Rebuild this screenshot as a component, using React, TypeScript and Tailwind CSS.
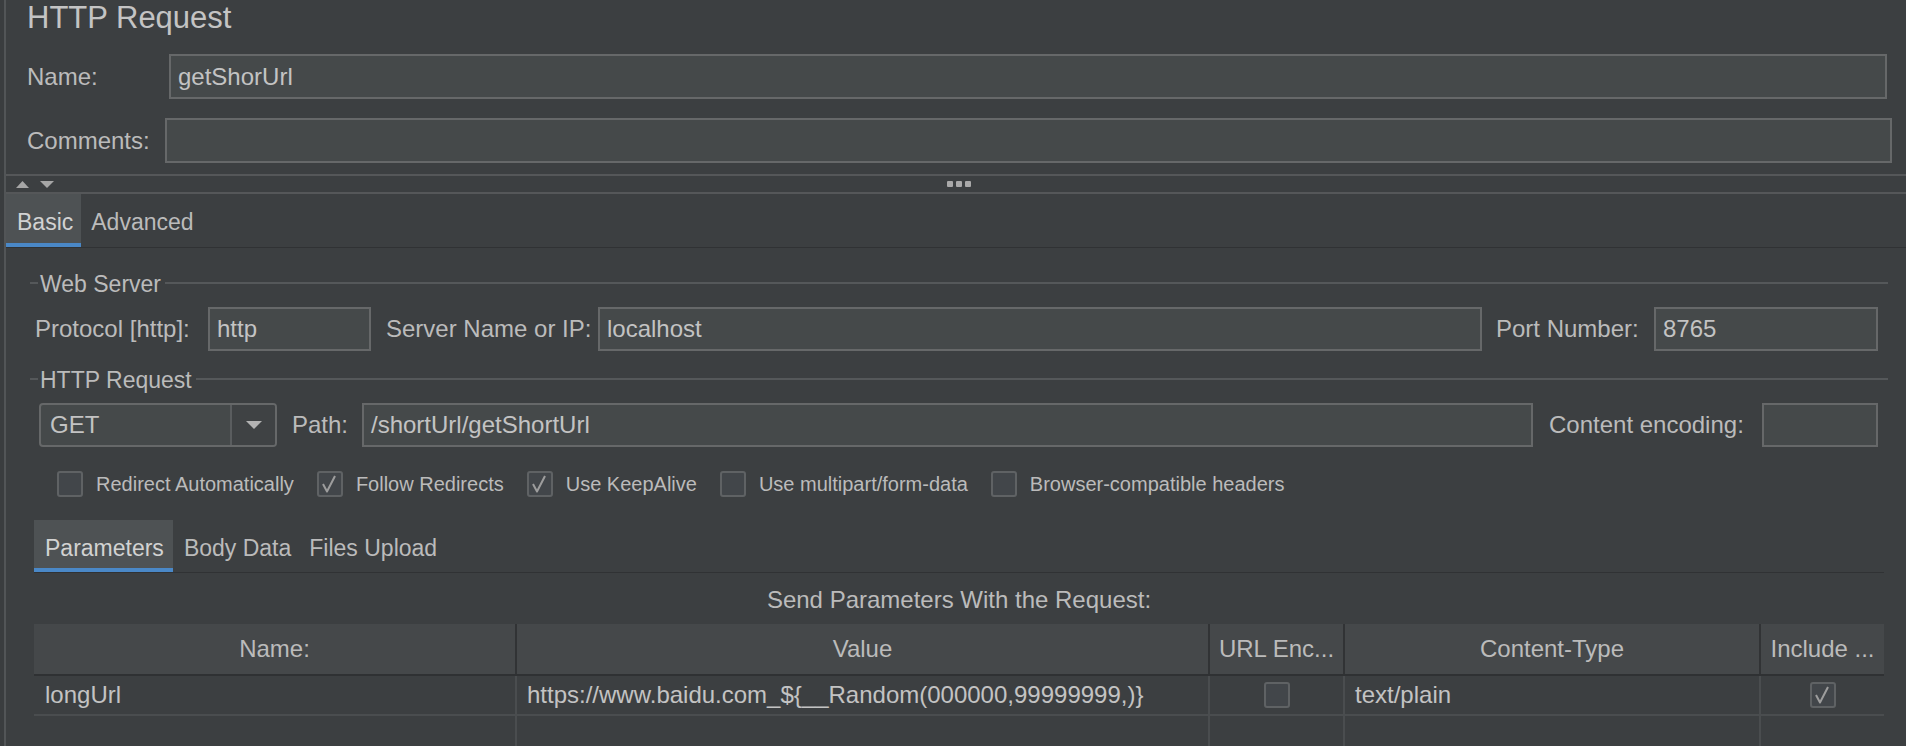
import React from "react";

function Input({ value, className }: { value?: string; className: string }) {
  return (
    <div
      className={
        "bg-[#45494a] border-2 border-[#666869] flex items-center pl-[7px] text-[24px] text-[#c3c3c3] whitespace-nowrap overflow-hidden " +
        className
      }
    >
      {value}
    </div>
  );
}

function Check({ checked }: { checked?: boolean }) {
  return (
    <div className="w-[26px] h-[26px] shrink-0 rounded-[3px] border-2 border-[#5f6264] bg-[#42464a] flex items-center justify-center">
      {checked && (
        <svg width="22" height="22" viewBox="0 0 22 22">
          <path d="M4 11 L8 18.5 L16 3" fill="none" stroke="#9d9d9d" strokeWidth="2" strokeLinejoin="round" />
        </svg>
      )}
    </div>
  );
}

function Legend({ title }: { title: string }) {
  return (
    <div className="flex items-center h-[24px]">
      <div className="w-[8px] h-[2px] bg-[#55585a] -mt-[2px]" />
      <span className="pl-[2px] pr-[4px] text-[23px] leading-[24px] whitespace-nowrap">{title}</span>
      <div className="flex-1 h-[2px] bg-[#55585a] -mt-[2px]" />
    </div>
  );
}

function CheckItem({ label, checked }: { label: string; checked?: boolean }) {
  return (
    <div className="flex items-center">
      <Check checked={checked} />
      <span className="ml-[13px] text-[20px] whitespace-nowrap">{label}</span>
    </div>
  );
}

export default function App() {
  return (
    <div className="w-full h-[746px] overflow-hidden bg-[#3c3f41] text-[#bbbbbb] font-['Liberation_Sans',Arial,sans-serif] flex">
      <div className="w-[4px] shrink-0 bg-[#3a3d3f]" />
      <div className="flex-1 min-w-0 border-l-2 border-[#525557] flow-root">
        {/* Title */}
        <div className="pl-[21px] h-[36px] leading-[36px] text-[31px] text-[#c4c4c4] whitespace-nowrap">HTTP Request</div>

        {/* Name */}
        <div className="mt-[18px] flex items-center h-[45px] pl-[21px] pr-[19px]">
          <div className="w-[142px] shrink-0 text-[24px]">Name:</div>
          <Input className="flex-1 h-[45px]" value="getShorUrl" />
        </div>

        {/* Comments */}
        <div className="mt-[19px] flex items-center h-[45px] pl-[21px] pr-[14px]">
          <div className="w-[138px] shrink-0 text-[24px]">Comments:</div>
          <Input className="flex-1 h-[45px]" />
        </div>

        {/* Splitter */}
        <div className="mt-[11px] h-[2px] bg-[#555759]" />
        <div className="h-[16px] grid grid-cols-[1fr_auto_1fr] items-center">
          <div className="flex items-center pl-[10px] gap-[11px]">
            <svg width="13" height="7" viewBox="0 0 13 7">
              <path d="M6.5 0 L13 7 L0 7 Z" fill="#a6a6a6" />
            </svg>
            <svg width="14" height="7" viewBox="0 0 14 7">
              <path d="M0 0 L14 0 L7 7 Z" fill="#a6a6a6" />
            </svg>
          </div>
          <div className="flex gap-[3px] translate-x-[3px]">
            <div className="w-[6px] h-[6px] rounded-[1px] bg-[#a9a9a9]" />
            <div className="w-[6px] h-[6px] rounded-[1px] bg-[#a9a9a9]" />
            <div className="w-[6px] h-[6px] rounded-[1px] bg-[#a9a9a9]" />
          </div>
          <div />
        </div>
        <div className="h-[2px] bg-[#555759]" />

        {/* Tabs */}
        <div className="flex h-[54px] border-b border-[#303234]">
          <div className="flex flex-col bg-[#4e5254]">
            <div className="h-[49px] pt-[15px] pl-[11px] pr-[8px] text-[23px] leading-[26px] text-[#d2d2d2]">Basic</div>
            <div className="h-[4px] bg-[#4a88c7]" />
          </div>
          <div className="pt-[15px] pl-[10px] text-[23px] leading-[26px]">Advanced</div>
        </div>

        {/* Web Server */}
        <div className="ml-[24px] mr-[18px] mt-[24px]">
          <Legend title="Web Server" />
          <div className="mt-[11px] flex items-center h-[44px] pl-[5px] pr-[10px]">
            <div className="w-[173px] shrink-0 text-[24px] whitespace-nowrap">Protocol [http]:</div>
            <Input className="w-[163px] h-[44px] shrink-0" value="http" />
            <div className="ml-[15px] w-[212px] shrink-0 text-[24px] whitespace-nowrap">Server Name or IP:</div>
            <Input className="flex-1 h-[44px]" value="localhost" />
            <div className="ml-[14px] w-[158px] shrink-0 text-[24px] whitespace-nowrap">Port Number:</div>
            <Input className="w-[224px] h-[44px] shrink-0" value="8765" />
          </div>
        </div>

        {/* HTTP Request */}
        <div className="ml-[24px] mr-[18px] mt-[17px]">
          <Legend title="HTTP Request" />
          <div className="mt-[11px] flex items-center h-[44px] pl-[9px] pr-[10px]">
            <div className="w-[238px] h-[44px] shrink-0 rounded-[4px] border-2 border-[#666869] bg-[#45494a] flex overflow-hidden">
              <div className="flex-1 flex items-center pl-[9px] text-[24px] text-[#c3c3c3]">GET</div>
              <div className="w-[45px] border-l-2 border-[#5a5d5f] bg-[#3f4244] flex items-center justify-center">
                <svg width="16" height="8" viewBox="0 0 16 8">
                  <path d="M0 0 L16 0 L8 8 Z" fill="#b3b3b3" />
                </svg>
              </div>
            </div>
            <div className="ml-[15px] w-[70px] shrink-0 text-[24px]">Path:</div>
            <Input className="flex-1 h-[44px]" value="/shortUrl/getShortUrl" />
            <div className="ml-[16px] w-[213px] shrink-0 text-[24px] whitespace-nowrap">Content encoding:</div>
            <Input className="w-[116px] h-[44px] shrink-0" />
          </div>
          <div className="mt-[24px] flex items-center h-[26px] pl-[27px] gap-[23px]">
            <CheckItem label="Redirect Automatically" />
            <CheckItem label="Follow Redirects" checked />
            <CheckItem label="Use KeepAlive" checked />
            <CheckItem label="Use multipart/form-data" />
            <CheckItem label="Browser-compatible headers" />
          </div>
        </div>

        {/* Parameters */}
        <div className="ml-[28px] mr-[22px] mt-[23px]">
          <div className="flex h-[53px] border-b border-[#303234]">
            <div className="flex flex-col bg-[#4e5254]">
              <div className="h-[48px] pt-[15px] pl-[11px] pr-[9px] text-[23px] leading-[26px] text-[#d2d2d2]">Parameters</div>
              <div className="h-[4px] bg-[#4a88c7]" />
            </div>
            <div className="pt-[15px] pl-[11px] pr-[9px] text-[23px] leading-[26px]">Body Data</div>
            <div className="pt-[15px] pl-[9px] pr-[9px] text-[23px] leading-[26px]">Files Upload</div>
          </div>
          <div className="mt-[15px] h-[24px] text-center text-[24px] leading-[24px]">Send Parameters With the Request:</div>

          <div className="mt-[12px]">
            <div className="grid grid-cols-[483px_693px_135px_416px_123px] h-[50px] bg-[#45484a] text-[24px]">
              <div className="flex items-center justify-center border-r-2 border-[#313335]">Name:</div>
              <div className="flex items-center justify-center border-r-2 border-[#313335]">Value</div>
              <div className="flex items-center justify-center border-r-2 border-[#313335] whitespace-nowrap">URL Enc...</div>
              <div className="flex items-center justify-center border-r-2 border-[#313335]">Content-Type</div>
              <div className="flex items-center justify-center whitespace-nowrap">Include ...</div>
            </div>
            <div className="h-[2px] bg-[#2f3133]" />
            <div className="grid grid-cols-[483px_693px_135px_416px_123px] h-[38px] text-[24px] text-[#c3c3c3]">
              <div className="flex items-center pl-[11px] border-r-2 border-[#4a4d4f]">longUrl</div>
              <div className="flex items-center pl-[10px] border-r-2 border-[#4a4d4f] whitespace-nowrap">https://www.baidu.com_${"{"}__Random(000000,99999999,){"}"}</div>
              <div className="flex items-center justify-center border-r-2 border-[#4a4d4f]">
                <Check />
              </div>
              <div className="flex items-center pl-[10px] border-r-2 border-[#4a4d4f]">text/plain</div>
              <div className="flex items-center justify-center">
                <Check checked />
              </div>
            </div>
            <div className="h-[2px] bg-[#4a4d4f]" />
            <div className="grid grid-cols-[483px_693px_135px_416px_123px] h-[38px]">
              <div className="border-r-2 border-[#4a4d4f]" />
              <div className="border-r-2 border-[#4a4d4f]" />
              <div className="border-r-2 border-[#4a4d4f]" />
              <div className="border-r-2 border-[#4a4d4f]" />
              <div />
            </div>
          </div>
        </div>
      </div>
    </div>
  );
}
